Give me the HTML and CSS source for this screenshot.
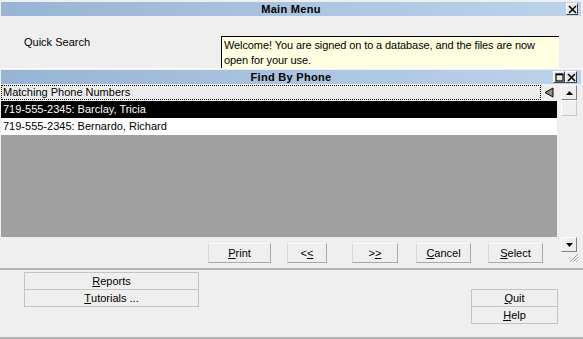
FILE: index.html
```html
<!DOCTYPE html>
<html>
<head>
<meta charset="utf-8">
<link rel="stylesheet" href="styles.css">
</head>
<body>
<div class="screen">
  <div class="titlebar main-title">
    <span class="title-text">Main Menu</span>
    <span class="tbtn close-main"><svg width="9" height="9" viewBox="0 0 9 9"><path d="M1 1L8 8M8 1L1 8" stroke="#000" stroke-width="1.6"/></svg></span>
  </div>
  <div class="main-top">
    <div class="qs">Quick Search</div>
    <div class="welcome">Welcome! You are signed on to a database, and the files are now open for your use.</div>
  </div>
  <div class="child">
    <div class="titlebar child-title">
      <span class="title-text">Find By Phone</span>
      <span class="tbtns">
        <span class="tbtn"><svg width="9" height="9" viewBox="0 0 9 9"><rect x="1" y="1" width="7" height="7" fill="none" stroke="#000" stroke-width="1.2"/><path d="M1 1.6H8" stroke="#000" stroke-width="1.4"/></svg></span>
        <span class="tbtn"><svg width="9" height="9" viewBox="0 0 9 9"><path d="M1 1L8 8M8 1L1 8" stroke="#000" stroke-width="1.6"/></svg></span>
      </span>
    </div>
    <div class="child-body">
      <div class="list-col">
        <div class="list-head">
          <div class="head-cell">Matching Phone Numbers</div>
          <div class="head-arrow"><svg width="12" height="11" viewBox="0 0 12 11"><path d="M10 1L2 5.5L10 10Z" fill="#909090" stroke="#000" stroke-width="1"/></svg></div>
        </div>
        <div class="row selected">719-555-2345: Barclay, Tricia</div>
        <div class="row">719-555-2345: Bernardo, Richard</div>
        <div class="empty"></div>
        <div class="actions">
          <span class="btn w-print"><u>P</u>rint</span>
          <span class="btn w-prev">&lt;<u>&lt;</u></span>
          <span class="btn w-next">&gt;<u>&gt;</u></span>
          <span class="btn w-cancel"><u>C</u>ancel</span>
          <span class="btn w-select"><u>S</u>elect</span>
        </div>
      </div>
      <div class="scroll-col">
        <div class="sbtn"><svg width="7" height="4" viewBox="0 0 7 4"><path d="M3.5 0L7 4H0Z" fill="#000"/></svg></div>
        <div class="sbtn thumb"></div>
        <div class="track"></div>
        <div class="sbtn"><svg width="7" height="4" viewBox="0 0 7 4"><path d="M0 0H7L3.5 4Z" fill="#000"/></svg></div>
        <div class="grip"><svg width="10" height="10" viewBox="0 0 10 10"><path d="M9 1L1 9M9 4L4 9M9 7L7 9" stroke="#a0a0a0" stroke-width="1"/><path d="M10 2L2 10M10 5L5 10M10 8L8 10" stroke="#fff" stroke-width="1"/></svg></div>
      </div>
    </div>
  </div>
  <div class="bottom">
    <div class="stack left-stack">
      <span class="btn flat"><u>R</u>eports</span>
      <span class="btn flat"><u>T</u>utorials ...</span>
    </div>
    <div class="stack right-stack">
      <span class="btn flat"><u>Q</u>uit</span>
      <span class="btn flat"><u>H</u>elp</span>
    </div>
  </div>
</div>
</body>
</html>
```

FILE: styles.css
```css
html, body {
  margin: 0;
  padding: 0;
  background: #efefef;
}
.screen {
  width: 583px;
  height: 339px;
  overflow: hidden;
  font-family: "Liberation Sans", Arial, sans-serif;
  font-size: 11px;
  color: #000;
  display: flex;
  flex-direction: column;
  border-bottom: 2px solid #b4b4b4;
  box-sizing: border-box;
}
.titlebar {
  position: relative;
  height: 14px;
  margin-left: 1px;
  width: 580px;
  background: linear-gradient(to right, #98b4d4, #bcd3eb);
  display: flex;
  align-items: center;
  justify-content: center;
  flex-shrink: 0;
}
.title-text {
  font-weight: bold;
  font-size: 11px;
  letter-spacing: 0.3px;
}
.main-title {
  margin-top: 2px;
}
.tbtn {
  width: 10px;
  height: 10px;
  background: #e8e8e8;
  border: 1px solid;
  border-color: #fff #404040 #404040 #fff;
  display: flex;
  align-items: center;
  justify-content: center;
}
.close-main {
  position: absolute;
  right: 3px;
  top: 1px;
}
.tbtns {
  position: absolute;
  right: 4px;
  top: 1px;
  display: flex;
  gap: 0;
}
.main-top {
  height: 52px;
  overflow: hidden;
  display: flex;
  align-items: flex-start;
  flex-shrink: 0;
}
.qs {
  margin-left: 24px;
  margin-top: 20px;
  font-size: 11px;
  width: 197px;
}
.welcome {
  margin-top: 20px;
  width: 333px;
  height: 40px;
  background: #ffffe1;
  border-top: 1px solid #000;
  border-left: 1px solid #000;
  padding: 1px 2px;
  line-height: 15px;
  font-size: 11px;
  letter-spacing: -0.1px;
}
.child {
  border-top: 1px solid #fcfcfc;
  padding-top: 1px;
  height: 200px;
  box-sizing: border-box;
  flex-shrink: 0;
  display: flex;
  flex-direction: column;
}
.child-body {
  display: flex;
  flex: 1;
}
.list-col {
  margin-left: 1px;
  width: 556px;
  display: flex;
  flex-direction: column;
}
.list-head {
  margin-top: 1px;
  height: 15px;
  display: flex;
  align-items: stretch;
}
.head-cell {
  width: 540px;
  border: 1px dotted #000;
  background: #ececec;
  line-height: 13px;
  padding-left: 1px;
  box-sizing: border-box;
  font-size: 11px;
}
.head-arrow {
  width: 16px;
  display: flex;
  align-items: center;
  justify-content: center;
}
.row {
  height: 17px;
  line-height: 17px;
  padding-left: 2px;
  background: #fff;
  font-size: 11px;
}
.row.selected {
  margin-top: 1px;
  background: #000;
  color: #fff;
}
.empty {
  height: 102px;
  background: #a0a0a0;
}
.actions {
  margin-top: 6px;
  height: 20px;
  display: flex;
}
.btn {
  height: 20px;
  box-sizing: border-box;
  display: flex;
  align-items: center;
  justify-content: center;
  background: #efefef;
  border: 1px solid;
  border-color: #fafafa #a8a8a8 #a8a8a8 #d8d8d8;
  font-size: 11px;
}
.btn u {
  text-decoration: underline;
  text-underline-offset: 1px;
}
.w-print { margin-left: 207px; width: 63px; }
.w-prev { margin-left: 16px; width: 40px; }
.w-next { margin-left: 25px; width: 46px; }
.w-cancel { margin-left: 18px; width: 55px; }
.w-select { margin-left: 17px; width: 55px; }
.scroll-col {
  margin-left: 4px;
  width: 16px;
  display: flex;
  flex-direction: column;
  padding-top: 1px;
}
.sbtn {
  width: 16px;
  height: 15px;
  box-sizing: border-box;
  border: 1px solid;
  border-color: #fff #808080 #808080 #fff;
  background: #efefef;
  display: flex;
  align-items: center;
  justify-content: center;
}
.sbtn.thumb {
  height: 16px;
  border-color: #fff #c8c8c8 #c8c8c8 #fff;
}
.track {
  height: 121px;
}
.grip {
  margin-left: 8px;
  width: 10px;
  height: 10px;
  margin-top: 1px;
}
.bottom {
  flex: 1;
  border-top: 2px solid #b4b4b4;
  display: flex;
  justify-content: space-between;
  align-items: flex-start;
}
.stack {
  display: flex;
  flex-direction: column;
}
.btn.flat {
  height: 17px;
  border-color: #c4c4c4;
  border-width: 1px 1px 0 1px;
}
.btn.flat + .btn.flat {
  border-width: 1px;
  height: 18px;
}
.left-stack {
  margin-left: 24px;
  margin-top: 2px;
  width: 175px;
}
.left-stack .btn.flat {
  width: 175px;
}
.right-stack {
  margin-right: 25px;
  margin-top: 19px;
  width: 87px;
}
.right-stack .btn.flat {
  width: 87px;
}
```
